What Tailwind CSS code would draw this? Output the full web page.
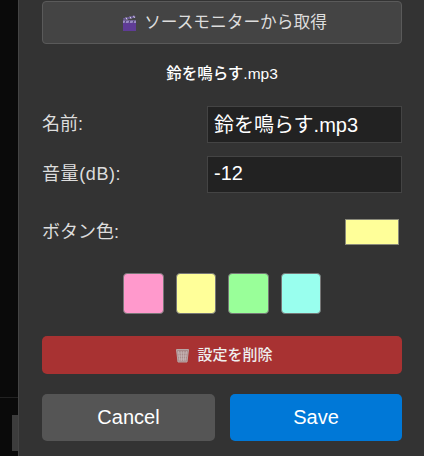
<!DOCTYPE html>
<html lang="ja">
  <head>
    <meta charset="UTF-8" />
    <title>Button settings</title>
    <script src="https://cdn.jsdelivr.net/npm/@tailwindcss/browser@4"></script>
  </head>
  <body class="bg-[#0a0a0a] h-[456px] w-[424px] overflow-hidden font-['Liberation_Sans','Noto_Sans_CJK_JP',sans-serif]">
    <div class="flex h-[456px]">
      <!-- page behind the dialog -->
      <div class="relative w-[18px] shrink-0 bg-[#0a0a0a]">
        <div class="absolute left-0 top-[397px] h-px w-full bg-[#222222]"></div>
        <div class="absolute left-[12px] top-[415px] h-[36px] w-[6px] bg-[#3c3c3c]"></div>
      </div>

      <div class="flex-1 border-l border-[#444444] bg-[#333333] pl-[23px] pr-[22px] pt-px text-white">
        <button class="flex h-[43px] w-full items-center justify-center gap-[7px] rounded-[4px] border border-[#5a5a5a] bg-[#444444] pl-[5px] text-[16.7px] text-[#dddddd]">
          <svg width="15" height="16" viewBox="0 0 15 16">
            <path d="M1 3.2 13 .4 13.6 2.4 1.6 5.2Z" fill="#6a5a94" />
            <path d="M4 2.5 5 4.6M8 1.6 9 3.7M11.5.8 12.5 2.9" stroke="#d8d0ea" stroke-width="1" />
            <rect x="1" y="5.5" width="13" height="10.5" fill="#5f3c96" />
            <rect x="1" y="5.5" width="13" height="2.5" fill="#9a8cc4" />
            <path d="M4 5.5 3 8M8 5.5 7 8M12 5.5 11 8" stroke="#4a3a70" stroke-width="1" />
          </svg>
          <span>ソースモニターから取得</span>
        </button>

        <p class="mt-[20px] text-center text-[15.5px] leading-[20px] font-medium">鈴を鳴らす.mp3</p>

        <div class="mt-[22px] flex h-[37px] items-center justify-between">
          <label class="text-[18px] text-[#dddddd]">名前:</label>
          <input value="鈴を鳴らす.mp3" class="h-[37px] w-[195px] border border-[#444444] bg-[#222222] px-[6px] pb-[2px] text-[20px] text-white" />
        </div>

        <div class="mt-[13px] flex h-[37px] items-center justify-between">
          <label class="text-[18px] tracking-[0.6px] text-[#dddddd]">音量(dB):</label>
          <input value="-12" class="h-[37px] w-[195px] border border-[#444444] bg-[#222222] px-[6px] pb-[2px] text-[20px] text-white" />
        </div>

        <div class="mt-[26px] flex h-[26px] items-center justify-between pr-[3px]">
          <label class="text-[18px] text-[#dddddd]">ボタン色:</label>
          <div class="h-[26px] w-[54px] border border-[#8a8a7a] bg-[#ffff99]"></div>
        </div>

        <div class="mt-[28px] flex justify-center gap-[12px]">
          <div class="h-[41px] w-[40.5px] rounded-[4px] border border-[#777777] bg-[#ff99cc]"></div>
          <div class="h-[41px] w-[40.5px] rounded-[4px] border border-[#777777] bg-[#ffff99]"></div>
          <div class="h-[41px] w-[40.5px] rounded-[4px] border border-[#777777] bg-[#99ff99]"></div>
          <div class="h-[41px] w-[40.5px] rounded-[4px] border border-[#777777] bg-[#99ffee]"></div>
        </div>

        <button class="mt-[22px] flex h-[38px] w-full items-center justify-center gap-[7px] rounded-[5px] bg-[#a83232] pl-[4px] text-[15px] text-[#eeeeee]">
          <svg width="15" height="15" viewBox="0 0 15 15">
            <path d="M1.5 1.5h12L12 14H3Z" fill="#a88a8a" stroke="#b8a6a6" />
            <path d="M3.5 3 5 13M6.2 3l.4 10M8.8 3l-.4 10M11.5 3 10 13M2.5 5h10M3 8h9M3.5 11h8" stroke="#d2c4c4" stroke-width=".6" fill="none" />
          </svg>
          <span class="font-medium">設定を削除</span>
        </button>

        <div class="mt-[20px] flex gap-[15px]">
          <button class="h-[47px] w-[173px] rounded-[5px] bg-[#555555] pb-[2px] text-[20px] text-white">Cancel</button>
          <button class="h-[47px] flex-1 rounded-[5px] bg-[#0078d7] pb-[2px] text-[20px] text-white">Save</button>
        </div>
      </div>
    </div>
  </body>
</html>
